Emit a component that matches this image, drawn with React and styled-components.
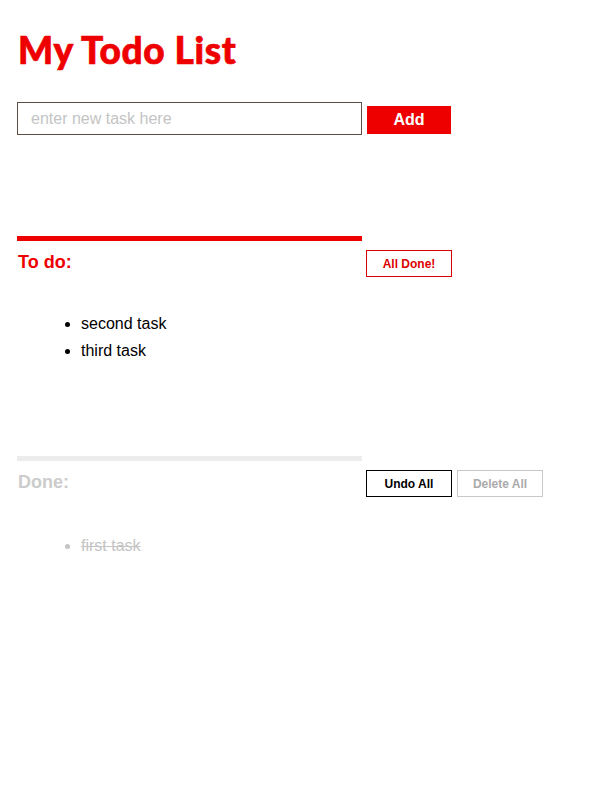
import React, { useState } from "react";
import styled, { createGlobalStyle } from "styled-components";

const GlobalStyle = createGlobalStyle`
  body {
    margin: 0;
    background: #fff;
    font-family: "Liberation Sans", Arial, sans-serif;
  }
`;

const Page = styled.div`
  padding: 16px 17px 40px 17px;
`;

const Title = styled.h1`
  font-family: Lato, "Liberation Sans", sans-serif;
  font-weight: 900;
  font-size: 37px;
  line-height: 44px;
  color: #ee0000;
  margin: 12px 0 0 1px;
  letter-spacing: 0.6px;
  -webkit-text-stroke: 0.7px #ee0000;
`;

const Form = styled.form`
  display: flex;
  align-items: flex-start;
  gap: 5px;
  margin-top: 30px;
`;

const TaskInput = styled.input`
  box-sizing: border-box;
  width: 345px;
  height: 33px;
  border: 1px solid #5c5046;
  padding: 0 13px;
  font-family: "Liberation Sans", Arial, sans-serif;
  font-size: 16px;
  outline: none;
  &::placeholder {
    color: #c4c4c4;
  }
`;

const AddButton = styled.button`
  box-sizing: border-box;
  width: 84px;
  height: 28px;
  margin-top: 4px;
  border: none;
  background: #ee0000;
  color: #fff;
  font-family: "Liberation Sans", Arial, sans-serif;
  font-weight: bold;
  font-size: 16px;
  cursor: pointer;
`;

const Section = styled.section`
  display: grid;
  grid-template-columns: 345px auto;
  column-gap: 4px;
  margin-top: ${(p) => p.$top}px;
`;

const Bar = styled.div`
  height: 5px;
  background: ${(p) => (p.$done ? "#ececec" : "#ee0000")};
`;

const Heading = styled.h2`
  margin: 9px 0 0 1px;
  font-size: 18px;
  line-height: 24px;
  font-weight: bold;
  color: ${(p) => (p.$done ? "#cccccc" : "#ee0000")};
`;

const Actions = styled.div`
  display: flex;
  gap: 5px;
  padding-top: 14px;
`;

const ActionButton = styled.button`
  box-sizing: border-box;
  width: 86px;
  height: 27px;
  background: #fff;
  border: 1px solid ${(p) => p.$color};
  color: ${(p) => p.$text || p.$color};
  font-family: "Liberation Sans", Arial, sans-serif;
  font-weight: bold;
  font-size: 12px;
  cursor: pointer;
`;

const List = styled.ul`
  grid-column: 1 / -1;
  margin: ${(p) => p.$top}px 0 0 0;
  padding-left: 64px;
  font-size: 16px;
  line-height: 27px;
  color: ${(p) => (p.$done ? "#c4c4c4" : "#000")};
`;

const Item = styled.li`
  text-decoration: ${(p) => (p.$done ? "line-through" : "none")};
`;

export default function App() {
  const [todo] = useState(["second task", "third task"]);
  const [done] = useState(["first task"]);

  return (
    <>
      <GlobalStyle />
      <Page>
        <Title>My Todo List</Title>
        <Form onSubmit={(e) => e.preventDefault()}>
          <TaskInput placeholder="enter new task here" />
          <AddButton type="submit">Add</AddButton>
        </Form>

        <Section $top={101}>
          <div>
            <Bar />
            <Heading>To do:</Heading>
          </div>
          <Actions>
            <ActionButton $color="#dd0000">All Done!</ActionButton>
          </Actions>
          <List $top={33}>
            {todo.map((t) => (
              <Item key={t}>{t}</Item>
            ))}
          </List>
        </Section>

        <Section $top={92}>
          <div>
            <Bar $done />
            <Heading $done>Done:</Heading>
          </div>
          <Actions>
            <ActionButton $color="#000">Undo All</ActionButton>
            <ActionButton $color="#c8c8c8" $text="#aaaaaa">
              Delete All
            </ActionButton>
          </Actions>
          <List $top={35} $done>
            {done.map((t) => (
              <Item key={t} $done>
                {t}
              </Item>
            ))}
          </List>
        </Section>
      </Page>
    </>
  );
}
